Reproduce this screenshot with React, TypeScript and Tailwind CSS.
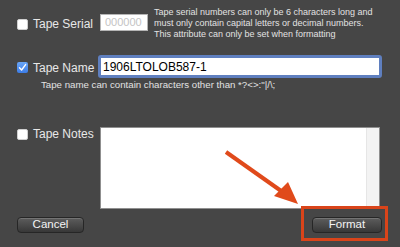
import React from "react";

function Check({ checked }: { checked?: boolean }) {
  if (checked) {
    return (
      <div className="w-[11px] h-[11px] rounded-[2px] bg-gradient-to-b from-[#6aa6f7] to-[#3c7ce6] flex items-center justify-center shrink-0">
        <svg width="9" height="9" viewBox="0 0 9 9">
          <path d="M1.5 4.8 L3.6 7 L7.6 1.6" stroke="white" strokeWidth="1.4" fill="none" strokeLinecap="round" strokeLinejoin="round" />
        </svg>
      </div>
    );
  }
  return <div className="w-[11px] h-[11px] rounded-[2px] bg-white shrink-0 border border-[#cfcfcf]" />;
}

function Btn({ children }: { children: React.ReactNode }) {
  return (
    <div className="h-[16px] w-full rounded-[4px] border border-[#262626] bg-gradient-to-b from-[#5d5d5d] to-[#383838] shadow-[inset_0_1px_0_rgba(255,255,255,0.15)] flex items-center justify-center text-[11.5px] leading-none text-[#f4f4f4]">
      {children}
    </div>
  );
}

export default function App() {
  return (
    <div
      className="relative w-[400px] h-[247px] bg-[#464646] overflow-hidden text-[#e8e8e8]"
      style={{ fontFamily: '"Liberation Sans", Arial, sans-serif' }}
    >
      <div className="flex flex-col px-[17px]">
        {/* Row 1 */}
        <div className="flex items-start pt-[7px]">
          <div className="w-[83px] flex items-center gap-[5px] mt-[11px]">
            <Check />
            <span className="text-[12px] leading-none">Tape Serial</span>
          </div>
          <div className="w-[48px] h-[17px] mt-[7px] bg-white border border-[#b5b5b5] flex items-center pl-[4px] text-[11px] text-[#c4c4c4]">
            000000
          </div>
          <div className="ml-[6px] text-[9px] leading-[11px] text-[#e2e2e2] whitespace-nowrap">
            <div>Tape serial numbers can only be 6 characters long and</div>
            <div>must only contain capital letters or decimal numbers.</div>
            <div>This attribute can only be set when formatting</div>
          </div>
        </div>
        {/* Row 2 */}
        <div className="flex items-center mt-[15px]">
          <div className="w-[81px] flex items-center gap-[5px] pt-[2px]">
            <Check checked />
            <span className="text-[12px] leading-none">Tape Name</span>
          </div>
          <div className="w-[284px] h-[23px] rounded-[3px] border-[3px] border-[#5f7fbf] bg-white flex items-center pl-[2px] text-[12px] text-black font-medium">
            1906LTOLOB587-1
          </div>
        </div>
        <div className="pl-[24px] mt-[1px] text-[9.7px] leading-[11px] text-[#e2e2e2] whitespace-nowrap">
          Tape name can contain characters other than *?&lt;&gt;:"|/\;
        </div>
        {/* Row 3 */}
        <div className="flex items-start mt-[37px]">
          <div className="w-[83px] flex items-center gap-[5px] pt-[1px]">
            <Check />
            <span className="text-[12px] leading-none">Tape Notes</span>
          </div>
          <div className="w-[280px] h-[82px] bg-white border border-[#8f8f8f] flex justify-end">
            <div className="w-[13px] h-full bg-[#f3f3f3] border-l border-[#e6e6e6]" />
          </div>
        </div>
        {/* Buttons */}
        <div className="flex justify-between mt-[8px] pr-[1px]">
          <div className="w-[67px]">
            <Btn>Cancel</Btn>
          </div>
          <div className="relative w-[70px]">
            <Btn>Format</Btn>
            <div className="absolute left-[-11px] top-[-11px] right-[-6px] bottom-[-8px] border-[3px] border-[#d9441a]" />
          </div>
        </div>
      </div>
      {/* Arrow annotation */}
      <svg className="absolute left-0 top-0" width="400" height="247" viewBox="0 0 400 247">
        <line x1="226" y1="152" x2="284" y2="193" stroke="#e04a1b" strokeWidth="4" />
        <polygon points="298,204 274,196 288,182" fill="#e04a1b" />
      </svg>
    </div>
  );
}
